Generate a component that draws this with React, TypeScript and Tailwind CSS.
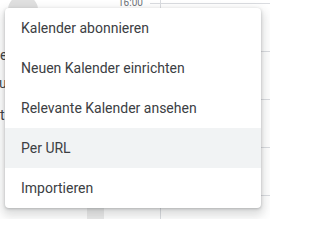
const items = [
  'Kalender abonnieren',
  'Neuen Kalender einrichten',
  'Relevante Kalender ansehen',
  'Per URL',
  'Importieren',
];

export default function App() {
  return (
    <div className="relative w-[270px] h-[219px] overflow-hidden bg-white font-['Roboto',sans-serif]">
      {/* calendar behind the menu */}
      <div className="flex h-full">
        <div className="w-[118px] flex flex-col text-[14px] leading-[20px] text-[#3c4043]">
          <div className="ml-[8px] mt-[-5px] w-[30px] h-[30px] rounded-full bg-[#e0e0e0]" />
          <span className="mt-[20px]">e</span>
          <span className="mt-[8px] ml-[-1px]">u</span>
          <span className="mt-[12px]">t</span>
          <div className="mt-auto ml-[87px] w-[17px] h-[12px] bg-[#ebebeb]" />
        </div>
        <div className="w-[32px]">
          <span className="block mt-[-3px] text-[10px] leading-[12px] text-[#70757a]">16:00</span>
        </div>
        <div className="flex-1 flex">
          <div className="w-[10px] pt-[3px]">
            {[0, 1, 2, 3, 4].map(i => (
              <div key={i} className="h-[48px] border-t border-[#dadce0]" />
            ))}
          </div>
          <div className="flex-1 pt-[3px] border-l border-[#dadce0]">
            {[0, 1, 2, 3, 4].map(i => (
              <div key={i} className="h-[48px] border-t border-[#dadce0]" />
            ))}
          </div>
        </div>
      </div>

      {/* menu */}
      <div className="absolute left-[5px] top-[8px] w-[256px] bg-white rounded-[4px] shadow-[0_5px_10px_3px_rgba(60,64,67,0.17),0_1px_3px_rgba(60,64,67,0.3)]">
        {items.map(label => (
          <div
            key={label}
            className={`h-[40px] flex items-center px-4 text-[14px] text-[#3c4043] ${label === 'Per URL' ? 'bg-[#f1f3f4]' : ''}`}
          >
            {label}
          </div>
        ))}
      </div>
    </div>
  );
}
